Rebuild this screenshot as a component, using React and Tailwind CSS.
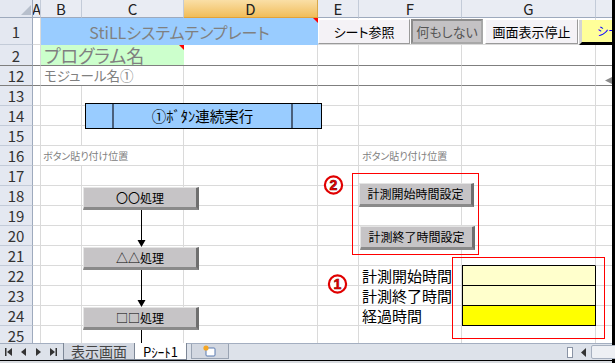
import React from 'react';

// gridline + header styles (Excel 2007 look)
const GRID = 'border-r border-b border-[#dadada]';
const GRID_DARK = 'border-r border-b border-r-[#dadada] border-b-[#7f7f7f]';
const COLS = ['A', 'B', 'C', 'D', 'E', 'F', 'G', 'H'];

const RowHead = ({ n, dark }) => (
  <div
    className={`flex items-center justify-center bg-[#e4e8f1] text-[15px] leading-none text-[#333] border-r border-r-[#9eaabd] border-b ${
      dark ? 'border-b-[#7f7f7f]' : 'border-b-[#c3cbd8]'
    }`}
  >
    {n}
  </div>
);

const Blank = ({ dark }) => <div className={dark ? GRID_DARK : GRID} />;

const PlainRow = ({ n }) => (
  <>
    <RowHead n={n} />
    {COLS.map((c) => (
      <Blank key={c} />
    ))}
  </>
);

const RedTri = () => (
  <div className="absolute right-0 top-0 w-[5px] h-[5px] bg-[#ff0000] [clip-path:polygon(0_0,100%_0,100%_100%)]" />
);

// gray 3D shape buttons
const Bevel = ({ className, children }) => (
  <div
    className={`absolute flex items-center justify-center whitespace-nowrap bg-[#c6c4c6] border-t border-l border-t-[#e4e4e4] border-l-[#e4e4e4] border-r-[3px] border-b-[3px] border-r-[#6f6f6f] border-b-[#8a8a8a] text-[12px] leading-none text-black ${className}`}
  >
    {children}
  </div>
);

const Circled = ({ n, className }) => (
  <svg className={`absolute ${className}`} width="21" height="20" viewBox="0 0 21 20">
    <circle cx="10.5" cy="10" r="8.6" fill="#fff" stroke="#e00000" strokeWidth="2.2" />
    <text
      x="10.5"
      y="15"
      textAnchor="middle"
      fontSize="14"
      fontWeight="bold"
      fill="#ff0000"
      stroke="#7a0000"
      strokeWidth="0.6"
      fontFamily="Liberation Sans, sans-serif"
    >
      {n}
    </text>
  </svg>
);

const TabBar = () => (
  <div className="relative h-[17px] bg-[#dde2ea] border-t border-[#a3aec0] flex items-stretch text-[#333]">
    {/* sheet navigation arrows */}
    <svg className="absolute left-[4px] top-[3px]" width="54" height="10" viewBox="0 0 54 10">
      <rect x="1" y="1" width="1.5" height="8" fill="#333" />
      <polygon points="8,1 3,5 8,9" fill="#333" />
      <polygon points="22,1 17,5 22,9" fill="#333" />
      <polygon points="32,1 37,5 32,9" fill="#333" />
      <polygon points="46,1 51,5 46,9" fill="#333" />
      <rect x="51.5" y="1" width="1.5" height="8" fill="#333" />
    </svg>
    <div className="absolute left-[63px] top-[-1px] w-[72px] h-[17px] bg-[#d3d8e1] border-l border-r border-b border-[#7d8796] flex items-center justify-center text-[14px] leading-none text-[#444]">
      表示画面
    </div>
    <div className="absolute left-[135px] top-[-1px] w-[52px] h-[17px] bg-white border-r border-b border-[#7d8796] flex items-center justify-center text-[13px] leading-none text-black">
      Pｼｰﾄ1
    </div>
    <div className="absolute left-[191px] top-[0px] w-[38px] h-[15px] bg-[#d3d8e1] border-l border-r border-b border-[#9aa4b3] flex items-center justify-center">
      <svg width="16" height="12" viewBox="0 0 16 12">
        <rect x="4" y="3" width="9" height="8" rx="1" fill="#fff" stroke="#5a7ab0" />
        <circle cx="4" cy="3" r="2.6" fill="#f5a623" />
      </svg>
    </div>
    {/* horizontal scroll controls */}
    <div className="absolute left-[567px] top-[3px] w-[6px] h-[11px] bg-white border border-[#8a94a5]" />
    <svg className="absolute left-[580px] top-[4px]" width="8" height="9" viewBox="0 0 8 9">
      <polygon points="6,0 1,4.5 6,9" fill="#333" />
    </svg>
    <div className="absolute left-[591px] top-[1px] w-[30px] h-[14px] bg-[#eef0f4] border border-[#a7b0bf] rounded-[2px]" />
  </div>
);

export default function App() {
  return (
    <div className="w-[615px] h-[363px] overflow-hidden bg-white flex [font-family:'Noto_Sans_CJK_JP',sans-serif] [font-feature-settings:'palt']">
      <div className="w-[612px] flex flex-col">
        <div className="relative h-[343px] overflow-hidden">
          <div className="grid grid-cols-[33px_8px_41px_102px_134px_41px_103px_134px_80px] grid-rows-[18px_27px_21px_20px_repeat(13,20px)]">
            {/* column header */}
            <div className="relative bg-[#e4e8f1] border-r border-b border-[#9eaabd]">
              <svg className="absolute left-[21px] top-[5px]" width="11" height="11" viewBox="0 0 11 11">
                <polygon points="10,0 10,10 0,10" fill="#b7bfcc" />
              </svg>
            </div>
            {COLS.map((c) =>
              c === 'D' ? (
                <div
                  key={c}
                  className="flex items-center justify-center bg-linear-to-b from-[#fadfa6] to-[#f1bd57] border-r border-b border-r-[#d9a848] border-b-[#e2a23a] text-[15px] leading-none text-[#222]"
                >
                  {c}
                </div>
              ) : (
                <div
                  key={c}
                  className="flex items-center justify-center overflow-hidden bg-[#e9ecf3] border-r border-b border-r-[#c3cbd8] border-b-[#9eaabd] text-[15px] leading-none text-[#222]"
                >
                  {c}
                </div>
              )
            )}

            {/* row 1 */}
            <RowHead n={1} />
            <Blank />
            <div className="relative col-span-3 bg-[#99ccff] flex items-center justify-center whitespace-nowrap text-[16px] leading-none text-[#808080]">
              StiLLシステムテンプレート
              <RedTri />
            </div>
            <Blank />
            <Blank />
            <Blank />
            <Blank />

            {/* row 2 */}
            <RowHead n={2} dark />
            <Blank dark />
            <div className="relative col-span-2 bg-[#ccffcc] border-b border-b-[#7f7f7f] flex items-center pl-[3px] whitespace-nowrap text-[18px] leading-none text-[#808080]">
              プログラム名
              <RedTri />
            </div>
            <Blank dark />
            <Blank dark />
            <Blank dark />
            <Blank dark />
            <Blank dark />

            {/* row 12 */}
            <RowHead n={12} dark />
            <Blank dark />
            <div className={`col-span-2 flex items-center pl-[3px] whitespace-nowrap text-[13.5px] leading-none text-[#808080] ${GRID_DARK}`}>
              モジュール名①
            </div>
            <Blank dark />
            <Blank dark />
            <Blank dark />
            <Blank dark />
            <Blank dark />

            <PlainRow n={13} />
            <PlainRow n={14} />
            <PlainRow n={15} />

            {/* row 16 */}
            <RowHead n={16} />
            <Blank />
            <div className={`col-span-2 flex items-center pl-[2px] whitespace-nowrap text-[10px] leading-none text-[#808080] ${GRID}`}>
              ボタン貼り付け位置
            </div>
            <Blank />
            <Blank />
            <div className={`flex items-center pl-[3px] whitespace-nowrap text-[10px] leading-none text-[#808080] ${GRID}`}>
              ボタン貼り付け位置
            </div>
            <Blank />
            <Blank />

            <PlainRow n={17} />
            <PlainRow n={18} />
            <PlainRow n={19} />
            <PlainRow n={20} />

            {/* row 21 */}
            <RowHead n={21} />
            <Blank />
            <Blank />
            <Blank />
            <Blank />
            <Blank />
            <Blank />
            <div className="border-r border-b border-r-[#dadada] border-b-black" />
            <Blank />

            {/* rows 22-24: timing block */}
            {[
              ['計測開始時間', 'bg-[#ffffcc]', 22],
              ['計測終了時間', 'bg-[#ffffcc]', 23],
              ['経過時間', 'bg-[#ffff00]', 24],
            ].map(([label, bg, n]) => (
              <React.Fragment key={n}>
                <RowHead n={n} />
                <Blank />
                <Blank />
                <Blank />
                <Blank />
                <Blank />
                <div className={`flex items-center pl-[3px] whitespace-nowrap text-[15px] leading-none text-black ${GRID}`}>{label}</div>
                <div className={`${bg} border-l border-r border-b border-black`} />
                <Blank />
              </React.Fragment>
            ))}

            <PlainRow n={25} />
          </div>

          {/* ---- floating shapes on the sheet ---- */}
          <div className="absolute left-[318px] top-[19px] w-[92px] h-[25px] bg-[#f4f2f6] border border-t-white border-l-white border-r-[#9a9a9a] border-b-[#9a9a9a] flex items-center justify-center whitespace-nowrap text-[13px] leading-none text-black">
            シート参照
          </div>
          <div className="absolute left-[411px] top-[19px] w-[72px] h-[25px] bg-[#c4c2c4] border-2 border-t-[#8c8c8c] border-l-[#8c8c8c] border-r-[#a8a8a8] border-b-[#a8a8a8] flex items-center justify-center whitespace-nowrap text-[13px] leading-none text-[#555]">
            何もしない
          </div>
          <div className="absolute left-[485px] top-[19px] w-[93px] h-[25px] bg-[#f4f2f6] border border-t-white border-l-white border-r-[#9a9a9a] border-b-[#9a9a9a] flex items-center justify-center whitespace-nowrap text-[13px] leading-none text-black">
            画面表示停止
          </div>
          <div className="absolute left-[579px] top-[20px] w-[50px] h-[25px] bg-[#ffff99] border-l-[3px] border-l-[#d4d4d4] border-b-[3px] border-b-black flex items-center pl-[15px] whitespace-nowrap text-[12px] leading-none text-[#0000ff]">
            シート
          </div>
          <svg className="absolute left-[605px] top-[77px]" width="7" height="7" viewBox="0 0 7 7">
            <polygon points="7,0 0,3.5 7,7" fill="#8a8a8a" />
          </svg>

          {/* ①ボタン連続実行 */}
          <div className="absolute left-[85px] top-[103px] w-[237px] h-[26px] bg-[#99ccff] border border-black flex">
            <div className="w-[28px] border-r-2 border-[#4a607c]" />
            <div className="flex-1 flex items-center justify-center whitespace-nowrap text-[14.5px] leading-none text-black">①ﾎﾞﾀﾝ連続実行</div>
            <div className="w-[30px] border-l-2 border-[#4a607c]" />
          </div>

          {/* process flow */}
          <Bevel className="left-[83px] top-[187px] w-[116px] h-[23px]">〇〇処理</Bevel>
          <Bevel className="left-[83px] top-[247px] w-[116px] h-[23px]">△△処理</Bevel>
          <Bevel className="left-[83px] top-[307px] w-[116px] h-[23px]">□□処理</Bevel>
          <svg className="absolute left-[131px] top-[209px]" width="20" height="134" viewBox="0 0 20 134">
            <line x1="10.5" y1="1" x2="10.5" y2="33" stroke="#000" strokeWidth="1" />
            <polygon points="6.5,31 14.5,31 10.5,38" fill="#000" />
            <line x1="10.5" y1="61" x2="10.5" y2="93" stroke="#000" strokeWidth="1" />
            <polygon points="6.5,91 14.5,91 10.5,98" fill="#000" />
            <line x1="10.5" y1="121" x2="10.5" y2="134" stroke="#000" strokeWidth="1" />
          </svg>

          {/* ② timer buttons */}
          <Circled n="2" className="left-[323px] top-[175px]" />
          <div className="absolute left-[352px] top-[173px] w-[127px] h-[82px] border border-[#ff0000]" />
          <Bevel className="left-[359px] top-[183px] w-[115px] h-[24px]">計測開始時間設定</Bevel>
          <Bevel className="left-[360px] top-[226px] w-[115px] h-[24px]">計測終了時間設定</Bevel>

          {/* ① timing results */}
          <Circled n="1" className="left-[327px] top-[274px]" />
          <div className="absolute left-[452px] top-[257px] w-[153px] h-[82px] border border-[#ff0000]" />
        </div>
        <TabBar />
        <div className="h-[3px] border-t border-black bg-[#d8dbe0]" />
      </div>
      <div className="w-[3px] bg-black" />
    </div>
  );
}
